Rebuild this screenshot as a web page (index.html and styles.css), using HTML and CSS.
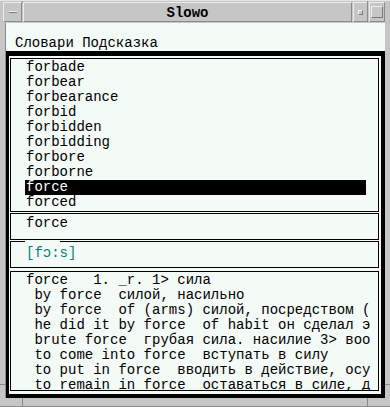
FILE: index.html
```html
<!DOCTYPE html>
<html lang="ru">
<head>
  <meta charset="UTF-8">
  <meta name="viewport" content="width=device-width, initial-scale=1.0">
  <title>Slowo</title>
  <link rel="stylesheet" href="styles.css">
</head>
<body>
  <div class="window">
    <div class="titlebar">
      <div class="tb-btn menu-btn"><span class="dash"></span></div>
      <div class="title">Slowo</div>
      <div class="tb-btn min-btn"><span class="dot"></span></div>
      <div class="tb-btn max-btn"><span class="square"></span></div>
    </div>

    <div class="client">
      <div class="menubar">
        <span class="menu-item">Словари</span>
        <span class="menu-item">Подсказка</span>
      </div>

      <div class="panel">
        <ul class="box wordlist">
          <li>forbade</li>
          <li>forbear</li>
          <li>forbearance</li>
          <li>forbid</li>
          <li>forbidden</li>
          <li>forbidding</li>
          <li>forbore</li>
          <li>forborne</li>
          <li class="selected">force</li>
          <li>forced</li>
        </ul>

        <div class="box entry">force</div>

        <div class="box transcription">[fɔ:s]</div>

        <div class="box article">
          <div class="line">force   1. _r. 1&gt; сила</div>
          <div class="line"> by force  силой, насильно</div>
          <div class="line"> by force  of (arms) силой, посредством (</div>
          <div class="line"> he did it by force  of habit он сделал э</div>
          <div class="line"> brute force  грубая сила. насилие 3&gt; воо</div>
          <div class="line"> to come into force  вступать в силу</div>
          <div class="line"> to put in force  вводить в действие, осу</div>
          <div class="line"> to remain in force  оставаться в силе, д</div>
        </div>
      </div>
    </div>

    <span class="notch notch-tl"></span>
    <span class="notch notch-tr"></span>
    <span class="notch notch-bl"></span>
    <span class="notch notch-br"></span>
    <span class="notch notch-lb"></span>
    <span class="notch notch-rb"></span>
  </div>
</body>
</html>
```

FILE: styles.css
```css
body {
  margin: 0;
  background-color: #c6c6c6;
  font-family: "Liberation Mono", "DejaVu Sans Mono", monospace;
  font-size: 14px;
  color: #000;
}

.window {
  position: relative;
  width: 390px;
  height: 407px;
  box-sizing: border-box;
  background-color: #c6c6c6;
  border-top: 1px solid #e6e6e6;
  border-bottom: 1px solid #8c8c8c;
  display: flex;
  flex-direction: column;
}

/* title bar */

.titlebar {
  display: flex;
  gap: 1px;
  height: 20px;
  margin: 1px 5px 0 3px;
  flex-shrink: 0;
}

.tb-btn,
.title {
  box-sizing: border-box;
  border: 1px solid;
  border-color: #ececec #8a8a8a #8a8a8a #ececec;
  background-color: #c6c6c6;
  display: flex;
  align-items: center;
  justify-content: center;
}

.menu-btn {
  width: 19px;
}

.title {
  flex: 1;
  font-weight: bold;
  font-size: 14px;
  padding-top: 1px;
}

.min-btn {
  width: 15px;
}

.max-btn {
  width: 16px;
}

.dash {
  width: 8px;
  height: 2px;
  border-top: 1px solid #f0f0f0;
  border-bottom: 1px solid #7c7c7c;
  box-sizing: border-box;
  background-color: #c6c6c6;
}

.dot {
  width: 3px;
  height: 3px;
  border: 1px solid;
  border-color: #f0f0f0 #7c7c7c #7c7c7c #f0f0f0;
}

.square {
  width: 10px;
  height: 10px;
  border: 1px solid;
  border-color: #f0f0f0 #7c7c7c #7c7c7c #f0f0f0;
}

/* client area */

.client {
  margin: 1px 5px 0 5px;
  background-color: #f4faf6;
  border-left: 1px solid #8a8a8a;
  display: flex;
  flex-direction: column;
  height: 375px;
  flex-shrink: 0;
}

.menubar {
  height: 28px;
  flex-shrink: 0;
  box-sizing: border-box;
  padding: 13px 0 0 9px;
  line-height: 15px;
}

.panel {
  flex-shrink: 0;
  border-style: solid;
  border-color: #000;
  border-width: 5px 4px 4px 3px;
  padding: 2px 2px 3px 1px;
  display: flex;
  flex-direction: column;
}

.box {
  flex-shrink: 0;
  border: 1px solid #000;
  margin: 0;
  line-height: 15px;
  background-color: #f4faf6;
}

.wordlist {
  list-style: none;
  height: 150px;
  padding: 1px 0;
  overflow: hidden;
}

.wordlist li {
  height: 15px;
  margin: 0 12px 0 14px;
  padding-left: 1px;
}

.wordlist li.selected {
  background-color: #000;
  color: #fff;
}

.entry {
  margin-top: 1px;
  height: 15px;
  padding: 2px 0 8px 15px;
}

.transcription {
  position: relative;
  margin-top: 1px;
  height: 15px;
  padding: 4px 0 6px 15px;
  color: #008080;
}

.transcription::before {
  content: "";
  position: absolute;
  top: -1px;
  left: 14px;
  width: 35px;
  height: 1px;
  background-color: #f4faf6;
}

.article {
  margin-top: 3px;
  height: 117px;
  padding: 1px 0 0 15px;
  overflow: hidden;
}

.article .line {
  height: 15px;
  white-space: pre;
}

/* resize notches in the frame */

.notch {
  position: absolute;
  background-color: #8a8a8a;
}

.notch-tl,
.notch-bl {
  left: 22px;
  width: 1px;
}

.notch-tr,
.notch-br {
  left: 367px;
  width: 1px;
}

.notch-tl,
.notch-tr {
  top: 0;
  height: 2px;
}

.notch-bl,
.notch-br {
  bottom: 0;
  height: 8px;
}

.notch-lb,
.notch-rb {
  top: 383px;
  height: 1px;
  width: 5px;
}

.notch-lb {
  left: 0;
}

.notch-rb {
  right: 0;
}
```
